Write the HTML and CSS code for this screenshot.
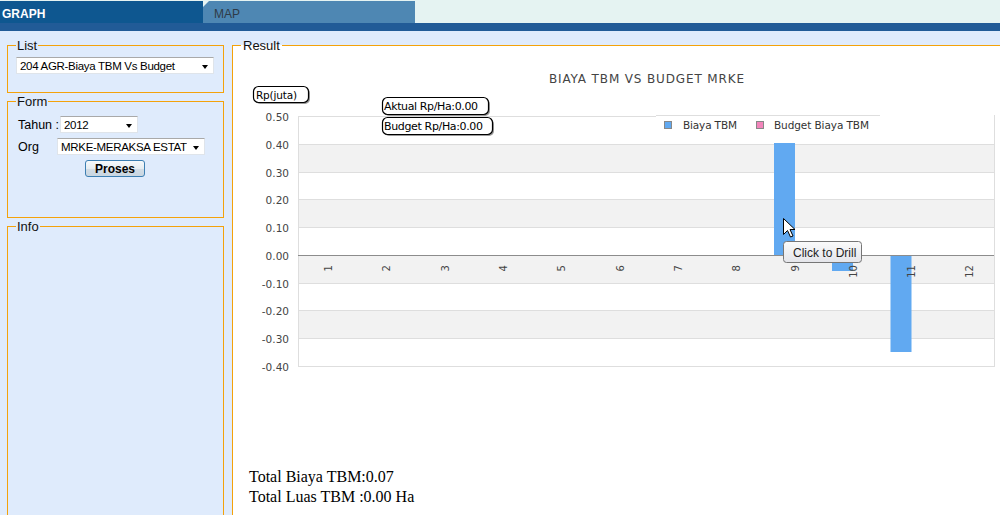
FILE: index.html
```html
<!DOCTYPE html>
<html>
<head>
<meta charset="utf-8">
<title>Graph</title>
<link rel="stylesheet" href="styles.css">
</head>
<body>
<header class="tabs">
  <div class="tab tab-graph">GRAPH</div>
  <div class="tab tab-map">MAP</div>
</header>
<div class="bar"></div>
<main class="main">
  <aside class="side">
    <fieldset class="box box-list">
      <legend>List</legend>
      <div class="sel sel-list"><span class="sel-text">204 AGR-Biaya TBM Vs Budget</span><span class="caret-box"><span class="caret"></span></span></div>
    </fieldset>
    <fieldset class="box box-form">
      <legend>Form</legend>
      <div class="row">
        <span class="lbl lbl-tahun">Tahun :</span>
        <div class="sel sel-tahun"><span class="sel-text">2012</span><span class="caret-box"><span class="caret"></span></span></div>
      </div>
      <div class="row">
        <span class="lbl lbl-org">Org</span>
        <div class="sel sel-org"><span class="sel-text">MRKE-MERAKSA ESTATE</span><span class="caret-box"><span class="caret"></span></span></div>
      </div>
      <div class="btn-row"><button class="btn">Proses</button></div>
    </fieldset>
    <fieldset class="box box-info">
      <legend>Info</legend>
    </fieldset>
  </aside>
  <fieldset class="box result">
    <legend>Result</legend>
    <svg class="chart" width="770" height="414" viewBox="233 53 770 414" xmlns="http://www.w3.org/2000/svg" font-family="DejaVu Sans, Verdana, sans-serif">
      <defs>
        <linearGradient id="tipg" x1="0" y1="0" x2="0" y2="1">
          <stop offset="0" stop-color="#fbfbfb"/>
          <stop offset="1" stop-color="#e4e5ea"/>
        </linearGradient>
      </defs>
      <text x="646.5" y="83" text-anchor="middle" font-size="12" fill="#444" textLength="195">BIAYA TBM VS BUDGET MRKE</text>

      <!-- bands -->
      <rect x="298" y="145" width="696" height="27" fill="#f2f2f2"/>
      <rect x="298" y="200" width="696" height="27" fill="#f2f2f2"/>
      <rect x="298" y="256" width="696" height="27" fill="#f2f2f2"/>
      <rect x="298" y="311" width="696" height="27" fill="#f2f2f2"/>
      <g stroke="#dedede" stroke-width="1">
        <line x1="298" y1="116.5" x2="656" y2="116.5"/>
        <line x1="298" y1="144.5" x2="994" y2="144.5"/>
        <line x1="298" y1="172.5" x2="994" y2="172.5"/>
        <line x1="298" y1="199.5" x2="994" y2="199.5"/>
        <line x1="298" y1="227.5" x2="994" y2="227.5"/>
        <line x1="298" y1="283.5" x2="994" y2="283.5"/>
        <line x1="298" y1="310.5" x2="994" y2="310.5"/>
        <line x1="298" y1="338.5" x2="994" y2="338.5"/>
        <line x1="298" y1="366.5" x2="995" y2="366.5"/>
        <line x1="298.5" y1="116" x2="298.5" y2="367"/>
        <line x1="994.5" y1="115" x2="994.5" y2="367"/>
        <line x1="656" y1="115.5" x2="880" y2="115.5"/>
      </g>

      <!-- bars -->
      <g fill="#61a9f1">
        <rect x="774" y="143" width="21" height="112.5"/>
        <rect x="832" y="255.5" width="21" height="15.5"/>
        <rect x="890.5" y="255.5" width="21" height="96.5"/>
      </g>
      <line x1="298" y1="255.5" x2="994" y2="255.5" stroke="#8c8c8c" stroke-width="1"/>

      <!-- y axis labels -->
      <g font-size="10.5" fill="#444" text-anchor="end">
        <text x="289" y="120.5">0.50</text>
        <text x="289" y="148.5">0.40</text>
        <text x="289" y="176.5">0.30</text>
        <text x="289" y="203.5">0.20</text>
        <text x="289" y="231.5">0.10</text>
        <text x="289" y="259.5">0.00</text>
        <text x="289" y="287.5">-0.10</text>
        <text x="289" y="314.5">-0.20</text>
        <text x="289" y="342.5">-0.30</text>
        <text x="289" y="370.5">-0.40</text>
      </g>

      <!-- x axis labels -->
      <g font-size="10" fill="#444" text-anchor="end">
        <text x="332.1" y="265" transform="rotate(-90 332.1 265)">1</text>
        <text x="390.4" y="265" transform="rotate(-90 390.4 265)">2</text>
        <text x="448.7" y="265" transform="rotate(-90 448.7 265)">3</text>
        <text x="507" y="265" transform="rotate(-90 507 265)">4</text>
        <text x="565.3" y="265" transform="rotate(-90 565.3 265)">5</text>
        <text x="623.6" y="265" transform="rotate(-90 623.6 265)">6</text>
        <text x="681.9" y="265" transform="rotate(-90 681.9 265)">7</text>
        <text x="740.2" y="265" transform="rotate(-90 740.2 265)">8</text>
        <text x="798.5" y="265" transform="rotate(-90 798.5 265)">9</text>
        <text x="856.8" y="265" transform="rotate(-90 856.8 265)">10</text>
        <text x="915.1" y="265" transform="rotate(-90 915.1 265)">11</text>
        <text x="973.4" y="265" transform="rotate(-90 973.4 265)">12</text>
      </g>

      <!-- legend -->
      <rect x="664.5" y="121.5" width="7" height="7" fill="#61a9f1" stroke="#888"/>
      <text x="683" y="128.5" font-size="10.5" fill="#333" textLength="54">Biaya TBM</text>
      <rect x="756.5" y="121.5" width="7" height="7" fill="#f285bb" stroke="#888"/>
      <text x="774" y="128.5" font-size="10.5" fill="#333" textLength="95">Budget Biaya TBM</text>

      <!-- annotation bubbles -->
      <rect x="255" y="88" width="55" height="16" rx="5" fill="#9a9a9a"/>
      <rect x="253.5" y="86.5" width="55" height="16" rx="5" fill="#fff" stroke="#000" stroke-width="1.2"/>
      <text x="256" y="98.5" font-size="10.5" fill="#000" textLength="41">Rp(juta)</text>

      <rect x="384" y="99" width="106" height="17" rx="5" fill="#9a9a9a"/>
      <rect x="382.5" y="97.5" width="106" height="17" rx="5" fill="#fff" stroke="#000" stroke-width="1.2"/>
      <text x="384" y="109.5" font-size="11" fill="#000" textLength="94">Aktual Rp/Ha:0.00</text>

      <rect x="384" y="119" width="110" height="17" rx="5" fill="#9a9a9a"/>
      <rect x="382.5" y="117.5" width="110" height="17" rx="5" fill="#fff" stroke="#000" stroke-width="1.2"/>
      <text x="384" y="129.5" font-size="11" fill="#000" textLength="99">Budget Rp/Ha:0.00</text>

      <!-- cursor -->
      <path d="M783.5 218.5 L783.5 234.5 L787.5 230.5 L790.5 237 L793 236 L790 229.5 L795 229.5 Z" fill="#fff" stroke="#000" stroke-width="1" stroke-linejoin="miter"/>

      <!-- tooltip -->
      <rect x="783.5" y="241.5" width="78" height="21" rx="3" fill="url(#tipg)" stroke="#767676"/>
      <text x="793" y="256.5" font-family="Liberation Sans, Arial, sans-serif" font-size="12" fill="#222">Click to Drill</text>
    </svg>
    <div class="totals">
      <div>Total Biaya TBM:0.07</div>
      <div>Total Luas TBM :0.00 Ha</div>
    </div>
  </fieldset>
</main>
</body>
</html>
```

FILE: styles.css
```css
html, body {
  margin: 0;
  padding: 0;
}
body {
  width: 1000px;
  height: 515px;
  overflow: hidden;
  background: #dfebfc;
  font-family: "Liberation Sans", Arial, sans-serif;
  color: #000;
}

.tabs {
  display: flex;
  height: 23px;
  box-sizing: border-box;
  padding-top: 1px;
  background: #e5f3f2;
}
.tab {
  height: 22px;
  box-sizing: border-box;
  padding-top: 6px;
  line-height: 14px;
  font-size: 12px;
}
.tab-graph {
  width: 203px;
  padding-left: 2px;
  background: #0e5790;
  color: #fff;
  font-weight: bold;
}
.tab-map {
  width: 212px;
  padding-left: 11px;
  background: #4e87b3;
  color: #2e3b48;
  clip-path: polygon(0 6px, 6px 0, 100% 0, 100% 100%, 0 100%);
}
.bar {
  height: 8px;
  background: #215b97;
}

.main {
  display: flex;
  align-items: flex-start;
  gap: 8px;
  padding: 7px 0 0 7px;
}
.side {
  width: 217px;
  flex: none;
}

.box {
  margin: 0;
  min-width: 0;
  border: 1px solid #f4a20a;
  padding: 0 8px;
}
.box legend {
  font-size: 13px;
  line-height: 15px;
  padding: 0 1px;
  color: #111;
}
.box-list {
  padding-top: 4px;
  padding-bottom: 18px;
}
.box-form {
  margin-top: 1px;
  padding-top: 7px;
  padding-bottom: 40px;
}
.box-info {
  margin-top: 1px;
  height: 400px;
}

.sel {
  display: flex;
  align-items: center;
  height: 17px;
  box-sizing: border-box;
  background: #fff;
  border: 1px solid #dfe4ea;
  border-top-color: #a9a9a9;
  padding-left: 3px;
  font-size: 11.5px;
  letter-spacing: -0.3px;
  white-space: nowrap;
  overflow: hidden;
}
.sel-text {
  flex: 1;
  overflow: hidden;
}
.caret-box {
  flex: none;
  width: 17px;
  display: flex;
  justify-content: center;
  align-items: center;
  padding-top: 3px;
}
.caret {
  width: 0;
  height: 0;
  border-left: 3.5px solid transparent;
  border-right: 3.5px solid transparent;
  border-top: 4px solid #000;
}
.sel-list {
  width: 198px;
}

.row {
  display: flex;
  align-items: center;
  height: 17px;
}
.row + .row {
  margin-top: 5px;
}
.lbl {
  font-size: 12.5px;
  padding-left: 2px;
  box-sizing: border-box;
  flex: none;
}
.lbl-tahun {
  width: 44px;
}
.lbl-org {
  width: 41px;
}
.sel-tahun {
  width: 78px;
}
.sel-org {
  width: 148px;
}
.btn-row {
  display: flex;
  justify-content: center;
  margin-top: 5px;
  padding-right: 1px;
}
.btn {
  width: 60px;
  height: 17px;
  box-sizing: border-box;
  padding: 0;
  border: 1px solid #3d7fb2;
  border-radius: 3px;
  background: linear-gradient(#f6f9fb, #e6edf2 50%, #d3dde6 51%, #c9d6e1);
  font-family: "Liberation Sans", Arial, sans-serif;
  font-weight: bold;
  font-size: 12px;
  line-height: 14px;
  color: #000;
}

.result {
  flex: none;
  width: 800px;
  height: 600px;
  padding: 0;
  background: #fff;
}
.result legend {
  margin-left: 8px;
  padding: 0 2px;
}
.chart {
  display: block;
}
.totals {
  padding-left: 16px;
  font-family: "Liberation Serif", "Times New Roman", serif;
  font-size: 16px;
  line-height: 20px;
  color: #000;
}
```
